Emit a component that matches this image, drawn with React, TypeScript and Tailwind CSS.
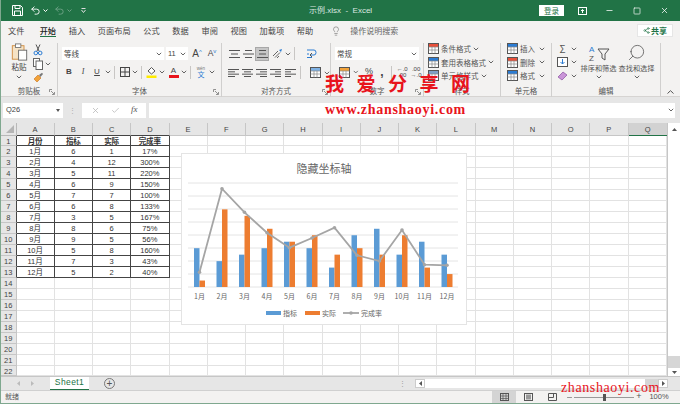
import React from 'react';
import { Undo2, Redo2, Lightbulb, Search, X, Check, Minus, Square, Share2 } from 'lucide-react';

const cjk = 'font-["Noto_Sans_CJK_SC","Liberation_Sans",sans-serif]';

const tabs = ['文件', '开始', '插入', '页面布局', '公式', '数据', '审阅', '视图', '加载项', '帮助'];
const columns = ['A', 'B', 'C', 'D', 'E', 'F', 'G', 'H', 'I', 'J', 'K', 'L', 'M', 'N', 'O', 'P', 'Q'];
const sheetRows = [
  ['月份', '指标', '实际', '完成率'],
  ['1月', '6', '1', '17%'],
  ['2月', '4', '12', '300%'],
  ['3月', '5', '11', '220%'],
  ['4月', '6', '9', '150%'],
  ['5月', '7', '7', '100%'],
  ['6月', '6', '8', '133%'],
  ['7月', '3', '5', '167%'],
  ['8月', '8', '6', '75%'],
  ['9月', '9', '5', '56%'],
  ['10月', '5', '8', '160%'],
  ['11月', '7', '3', '43%'],
  ['12月', '5', '2', '40%'],
];

const Chev = ({ className = '' }: { className?: string }) => (
  <svg width="6" height="4" viewBox="0 0 6 4" className={className}>
    <path d="M0.8 0.8 L3 3 L5.2 0.8" fill="none" stroke="#555" strokeWidth="0.9" />
  </svg>
);

const Launcher = () => (
  <svg width="6" height="6" viewBox="0 0 6 6" className="absolute right-[2px] bottom-[2px]">
    <path d="M0.5 3 V0.5 H3 M5.5 3 V5.5 H3 M2 2 L5 5" fill="none" stroke="#777" strokeWidth="0.8" />
  </svg>
);

// little stack of text lines, used for the alignment buttons
const Lines = ({ rows }: { rows: [number, number][] }) => (
  <svg width="11" height="10" viewBox="0 0 11 10">
    {rows.map(([a, b], i) => (
      <line key={i} x1={a} x2={b} y1={1.5 + i * (7 / (rows.length - 1))} y2={1.5 + i * (7 / (rows.length - 1))} stroke="#555" strokeWidth="1" />
    ))}
  </svg>
);

const Group = ({ width, label, launcher, children }: { width: string; label: string; launcher?: boolean; children: React.ReactNode }) => (
  <div className={`${width} relative flex flex-col border-r border-[#d0cfce] shrink-0 h-[54px]`}>
    <div className="flex-1 min-h-0">{children}</div>
    <div className="h-[12px] text-center text-[7.5px] leading-[12px] text-[#555]">{label}</div>
    {launcher && <Launcher />}
  </div>
);

const Sep = () => <div className="w-px h-[13px] bg-[#c8c6c4] mx-[3px]" />;

const StyleRow = ({ icon, label }: { icon: React.ReactNode; label: string }) => (
  <div className="flex items-center h-[13.5px] pl-[1px]">
    <span className="w-[12px] h-[12px] flex items-center justify-center">{icon}</span>
    <span className="ml-[2px] text-[7.5px] text-[#555] whitespace-nowrap">{label}</span>
    <Chev className="ml-[2px]" />
  </div>
);

const TableIcon = ({ accent }: { accent: string }) => (
  <svg width="11" height="11" viewBox="0 0 11 11">
    <rect x="0.5" y="0.5" width="10" height="10" fill="#fff" stroke="#555" />
    <rect x="1" y="1" width="9" height="3" fill={accent} />
    <path d="M0.5 4 H10.5 M0.5 7 H10.5 M4 4 V10.5 M7 4 V10.5" stroke="#888" strokeWidth="0.7" />
  </svg>
);

const Ribbon = () => (
  <div className="h-[57px] bg-[#f3f2f1] flex pt-[3px] border-b border-[#d6d4d2]">
    <Group width="w-[57px]" label="剪贴板" launcher>
      <div className="flex pl-[8px]">
        <div className="flex flex-col items-center w-[20px]">
          <svg width="17" height="18" viewBox="0 0 18 20">
            <rect x="1" y="3" width="13" height="15" fill="#f6e3c5" stroke="#d08a3c" />
            <rect x="4.5" y="1" width="6" height="4" fill="#fff" stroke="#777" />
            <rect x="8" y="8" width="9" height="11" fill="#fff" stroke="#666" />
          </svg>
          <span className="text-[7.5px] leading-[10px] text-[#444] mt-[1px]">粘贴</span>
          <Chev className="mt-[3px]" />
        </div>
        <div className="flex flex-col ml-[4px] gap-[2px] pt-[1px]">
          <svg width="10" height="12" viewBox="0 0 10 12">
            <path d="M3 0.5 L6 7 M7 0.5 L4 7" stroke="#555" fill="none" />
            <circle cx="2.8" cy="9" r="1.8" fill="none" stroke="#2b7cd3" />
            <circle cx="7.2" cy="9" r="1.8" fill="none" stroke="#2b7cd3" />
          </svg>
          <div className="flex items-center gap-[2px]">
            <svg width="10" height="12" viewBox="0 0 10 12">
              <rect x="0.5" y="0.5" width="6" height="8" fill="#fff" stroke="#666" />
              <rect x="3" y="3" width="6.5" height="8.5" fill="#fff" stroke="#666" />
            </svg>
            <Chev />
          </div>
          <svg width="11" height="11" viewBox="0 0 11 11">
            <path d="M1 7 L5 3 L8 6 L4 10 Z" fill="#f2a33a" stroke="#c8701c" strokeWidth="0.6" />
            <path d="M6 3 L9 0.8 L10 2 L7.5 5" fill="#777" />
          </svg>
        </div>
      </div>
    </Group>

    <Group width="w-[164px]" label="字体" launcher>
      <div className="pl-[4px] pt-[4px]">
        <div className="flex items-center">
          <div className="w-[102px] h-[13px] bg-white flex items-center justify-between pl-[2px] pr-[2px]">
            <span className="text-[7.5px] text-[#444]">等线</span>
            <Chev />
          </div>
          <div className="w-[22px] h-[13px] bg-white ml-[2px] flex items-center justify-between pl-[2px] pr-[2px]">
            <span className="text-[7.5px] text-[#444] font-['Liberation_Sans',sans-serif]">11</span>
            <Chev />
          </div>
          <span className="w-[14px] ml-[2px] text-center text-[10px] leading-[13px] text-[#444] font-['Liberation_Sans',sans-serif]">A<sup className="text-[6px] text-[#2b7cd3]">^</sup></span>
          <span className="w-[14px] ml-[1px] text-center text-[8.5px] leading-[13px] text-[#444] font-['Liberation_Sans',sans-serif]">A<sup className="text-[6px] text-[#2b7cd3]">v</sup></span>
        </div>
        <div className="flex items-center mt-[5px] h-[14px] text-[#444] font-['Liberation_Sans',sans-serif] text-[8px]">
          <span className="w-[14px] text-center font-bold">B</span>
          <span className="w-[14px] text-center italic font-['Liberation_Serif',serif]">I</span>
          <span className="w-[14px] text-center underline">U</span>
          <Chev className="ml-[1px]" />
          <Sep />
          <svg width="10" height="10" viewBox="0 0 10 10" className="ml-[2px]">
            <rect x="0.5" y="0.5" width="9" height="9" fill="none" stroke="#444" />
            <path d="M5 0.5 V9.5 M0.5 5 H9.5" stroke="#444" />
          </svg>
          <Chev className="ml-[2px]" />
          <Sep />
          <svg width="11" height="12" viewBox="0 0 11 12" className="ml-[1px]">
            <path d="M2 5 L5.5 1.5 L9 5 L5.5 8 Z" fill="#fff" stroke="#555" />
            <rect x="0.5" y="9.5" width="10" height="2.5" fill="#ffeb00" />
          </svg>
          <Chev className="ml-[2px]" />
          <div className="flex flex-col items-center w-[11px] ml-[3px] leading-[9px]">
            <span>A</span>
            <span className="w-[10px] h-[2.5px] bg-[#e8141c]" />
          </div>
          <Chev className="ml-[2px]" />
          <Sep />
          <div className="flex flex-col items-center w-[12px] ml-[1px]">
            <span className="text-[4.5px] leading-[5px] text-[#777]">wén</span>
            <span className={`text-[7px] leading-[7px] text-[#2b7cd3] ${cjk}`}>文</span>
          </div>
          <Chev className="ml-[2px]" />
        </div>
      </div>
    </Group>

    <Group width="w-[109px]" label="对齐方式" launcher>
      <div className="pl-[5px] pt-[3px]">
        <div className="flex items-center h-[15px]">
          <span className="w-[14px] flex justify-center"><Lines rows={[[0, 11], [2, 9], [0, 11]]} /></span>
          <span className="w-[14px] flex justify-center"><Lines rows={[[2, 9], [0, 11], [2, 9]]} /></span>
          <span className="w-[14px] h-[14px] bg-[#c6c6c6] border border-[#a8a8a8] flex items-center justify-center"><Lines rows={[[2, 9], [2, 9], [0, 11]]} /></span>
          <svg width="11" height="11" viewBox="0 0 11 11" className="ml-[3px]">
            <path d="M1 8 L6 3 M3 9.5 L8 4.5 M5 10 L7 8" stroke="#666" strokeWidth="1" />
            <path d="M7 2 L10 1 L9 4" fill="#2b7cd3" />
          </svg>
          <Chev className="ml-[2px]" />
          <Sep />
          <svg width="11" height="11" viewBox="0 0 11 11" className="ml-[8px]">
            <path d="M1 2 H8 Q10 2 10 4.5 Q10 7 8 7 H5 M1 6 H3 M1 9.5 H6" fill="none" stroke="#2b7cd3" />
            <path d="M6 5 L4 7 L6 9" fill="none" stroke="#555" />
          </svg>
        </div>
        <div className="flex items-center h-[15px] mt-[4px]">
          <span className="w-[14px] flex justify-center"><Lines rows={[[0, 11], [0, 7], [0, 11], [0, 7]]} /></span>
          <span className="w-[14px] flex justify-center"><Lines rows={[[0, 11], [2, 9], [0, 11], [2, 9]]} /></span>
          <span className="w-[14px] flex justify-center"><Lines rows={[[0, 11], [4, 11], [0, 11], [4, 11]]} /></span>
          <span className="w-[15px] flex justify-center"><Lines rows={[[0, 11], [5, 11], [0, 11], [5, 11]]} /></span>
          <span className="w-[14px] flex justify-center"><Lines rows={[[0, 11], [0, 6], [0, 11], [0, 6]]} /></span>
          <Sep />
          <span className="ml-[6px] flex"><TableIcon accent="#7fb2e5" /></span>
          <Chev className="ml-[3px]" />
        </div>
      </div>
    </Group>

    <Group width="w-[93px]" label="数字" launcher>
      <div className="pl-[4px] pt-[4px]">
        <div className="w-[84px] h-[13px] bg-white flex items-center justify-between px-[2px]">
          <span className="text-[7.5px] text-[#444]">常规</span>
          <Chev />
        </div>
        <div className="flex items-center mt-[5px] h-[14px] font-['Liberation_Sans',sans-serif] text-[#444]">
          <span className="ml-[4px] flex"><TableIcon accent="#f2a33a" /></span>
          <Chev className="ml-[3px]" />
          <span className="w-[14px] ml-[4px] text-center text-[9px]">%</span>
          <span className="w-[14px] text-center text-[12px] font-bold leading-[10px]">,</span>
          <Sep />
          <span className="w-[15px] text-center text-[6px] leading-[6px]">←.0<br />.00</span>
          <span className="w-[15px] text-center text-[6px] leading-[6px]">.00<br />→.0</span>
        </div>
      </div>
    </Group>

    <Group width="w-[77px]" label="样式">
      <div className="pl-[2px] -mt-[1px]">
        <StyleRow icon={<TableIcon accent="#e8503a" />} label="条件格式" />
        <StyleRow icon={<TableIcon accent="#2b7cd3" />} label="套用表格格式" />
        <StyleRow icon={<TableIcon accent="#7fa0c8" />} label="单元格样式" />
      </div>
    </Group>

    <Group width="w-[51px]" label="单元格">
      <div className="pl-[6px] -mt-[1px]">
        {['插入', '删除', '格式'].map((t, i) => (
          <div key={t} className="flex items-center h-[13.5px]">
            <TableIcon accent={i === 1 ? '#e8503a' : '#2b7cd3'} />
            <span className="ml-[2px] text-[7.5px] text-[#555] w-[19px]">{t}</span>
            <Chev />
          </div>
        ))}
      </div>
    </Group>

    <div className="w-[109px] relative flex flex-col border-r border-[#d0cfce] shrink-0 h-[54px]">
      <div className="flex-1 flex min-h-0">
        <div className="pl-[5px] w-[27px] -mt-[1px]">
          <div className="flex items-center h-[13.5px] gap-[3px]">
            <span className="w-[11px] text-center text-[10px] leading-[10px] text-[#555]">Σ</span>
            <Chev />
          </div>
          <div className="flex items-center h-[13.5px] gap-[3px]">
            <svg width="11" height="10" viewBox="0 0 11 10">
              <rect x="0.5" y="0.5" width="10" height="9" fill="#fff" stroke="#555" />
              <path d="M5.5 2 V7 M3.5 5 L5.5 7 L7.5 5" fill="none" stroke="#2b7cd3" />
            </svg>
            <Chev />
          </div>
          <div className="flex items-center h-[13.5px] gap-[3px]">
            <svg width="11" height="10" viewBox="0 0 11 10">
              <path d="M1 6 L6 1 L10 4 L5 9 Z" fill="#c995d8" stroke="#8a4fa0" strokeWidth="0.7" />
            </svg>
            <Chev />
          </div>
        </div>
        <div className="w-[39px] flex flex-col items-center">
          <svg width="22" height="18" viewBox="0 0 22 18" className="mt-[1px]">
            <text x="1" y="8" fontSize="8" fill="#2b7cd3" fontFamily="Liberation Sans">A</text>
            <text x="1" y="17" fontSize="8" fill="#555" fontFamily="Liberation Sans">Z</text>
            <path d="M10 5 H21 L17 10 V16 L14 14 V10 Z" fill="none" stroke="#555" />
          </svg>
          <span className="text-[7.2px] leading-[9px] text-[#555] whitespace-nowrap mt-[2px]">排序和筛选</span>
          <Chev className="mt-[2px]" />
        </div>
        <div className="w-[37px] flex flex-col items-center">
          <Search size={19} strokeWidth={1} className="text-[#555] -scale-x-100" />
          <span className="text-[7.2px] leading-[9px] text-[#555] whitespace-nowrap mt-[2px]">查找和选择</span>
          <Chev className="mt-[2px]" />
        </div>
      </div>
      <div className="h-[12px] text-center text-[7.5px] leading-[12px] text-[#555]">编辑</div>
    </div>

    <div className="flex-1 flex items-end justify-center pb-[2px]">
      <svg width="7" height="4" viewBox="0 0 7 4">
        <path d="M0.5 3.5 L3.5 0.7 L6.5 3.5" fill="none" stroke="#555" />
      </svg>
    </div>
  </div>
);

const FormulaBar = () => (
  <div className="h-[26px] bg-[#e6e6e6] flex items-center pl-[2px] pr-[5px]">
    <div className="w-[60px] h-[15px] bg-white flex items-center justify-between px-[3px]">
      <span className="text-[7.5px] text-[#444] font-['Liberation_Sans',sans-serif]">Q26</span>
      <svg width="4" height="3" viewBox="0 0 4 3"><path d="M0 0 H4 L2 3 Z" fill="#555" /></svg>
    </div>
    <div className="w-[19px] flex justify-center text-[7px] leading-[4px] text-[#aaa]">⋮</div>
    <div className="w-[64px] h-[15px] bg-white flex items-center justify-around px-[3px] text-[#b5b5b5]">
      <X size={9} />
      <Check size={9} />
      <span className="text-[9px] italic text-[#555] font-['Liberation_Serif',serif]">fx</span>
    </div>
    <div className="flex-1 h-[15px] ml-[3px] bg-white flex items-center justify-end pr-[1px]">
      <Chev />
    </div>
  </div>
);

const Sheet = () => (
  <div className="relative flex h-[253px]">
    <div className="w-[666px] grid grid-cols-[15.5px_repeat(17,38.26px)] grid-rows-[12.5px_repeat(22,10.96px)] font-['Liberation_Sans','Noto_Sans_CJK_SC',sans-serif]">
      <div className="bg-[#e6e6e6] border-r border-b border-[#b8b8b8] relative overflow-hidden">
        <svg width="10" height="10" viewBox="0 0 10 10" className="absolute right-[1px] bottom-[1px]">
          <path d="M9 1 V9 H1 Z" fill="#b5b5b5" />
        </svg>
      </div>
      {columns.map((c, ci) => (
        <div
          key={c}
          className={
            c === 'Q'
              ? 'bg-[#d2d2d2] border-b-[1.5px] border-[#217346] text-center text-[7.5px] leading-[13px] text-[#444]'
              : ci < 4
                ? 'bg-[#e6e6e6] border-r border-b border-r-[#c6c6c6] border-b-[#444] text-center text-[7.5px] leading-[13px] text-[#444]'
                : 'bg-[#e6e6e6] border-r border-b border-[#c6c6c6] text-center text-[7.5px] leading-[13px] text-[#444]'
          }
        >
          {c}
        </div>
      ))}
      {Array.from({ length: 22 }).map((_, r) => (
        <React.Fragment key={r}>
          <div className={r < 13
            ? 'bg-[#e6e6e6] border-r border-b border-r-[#444] border-b-[#c6c6c6] text-center text-[7.5px] leading-[11px] text-[#444]'
            : 'bg-[#e6e6e6] border-r border-b border-[#c6c6c6] text-center text-[7.5px] leading-[11px] text-[#444]'}>{r + 1}</div>
          {columns.map((c, ci) => {
            const value = sheetRows[r]?.[ci];
            if (value !== undefined) {
              return (
                <div key={c} className={`border-r border-b border-[#444] text-center text-[7.5px] leading-[11px] text-[#333] ${r === 0 ? 'font-bold' : ''}`}>
                  {value}
                </div>
              );
            }
            return <div key={c} className="border-r border-b border-[#e2e2e2] bg-white" />;
          })}
        </React.Fragment>
      ))}
    </div>

    <div className="flex-1 bg-[#e6e6e6] border-l border-[#c6c6c6] flex flex-col">
      <div className="h-[12px] bg-white flex items-center justify-center">
        <svg width="5" height="3" viewBox="0 0 5 3"><path d="M0 3 H5 L2.5 0 Z" fill="#555" /></svg>
      </div>
      <div className="h-[221px] bg-white" />
      <div className="flex-1 bg-[#d6d6d6]" />
      <div className="h-[8px] bg-white flex items-center justify-center">
        <svg width="5" height="3" viewBox="0 0 5 3"><path d="M0 0 H5 L2.5 3 Z" fill="#555" /></svg>
      </div>
    </div>

    <Chart />
  </div>
);

const barData = [
  [6, 1], [4, 12], [5, 11], [6, 9], [7, 7], [6, 8], [3, 5], [8, 6], [9, 5], [5, 8], [7, 3], [5, 2],
];
const linePts = [89.3, 5.7, 29.3, 49.7, 64.7, 55, 44.7, 72.3, 78, 47, 81.7, 82.3];

const Chart = () => {
  // coordinates inside the chart box, baseline and spacing measured off the screenshot
  const base = 134;
  const x = (i: number) => 18.5 + 22.5 * i;
  return (
    <div className="absolute left-[180px] top-[30px] w-[286px] h-[172px] bg-white border border-[#e4e4e4] flex flex-col items-center">
      <div className={`mt-[6px] text-[11px] leading-[16px] text-[#666] ${cjk}`}>隐藏坐标轴</div>
      <svg width="284" height="148" viewBox="1 23 284 148" className="block">
        {Array.from({ length: 9 }).map((_, i) => (
          <line key={i} x1="7" x2="277" y1={30 + 13 * i} y2={30 + 13 * i} stroke="#e4e4e4" strokeWidth="1" />
        ))}
        {barData.map(([a, b], i) => (
          <g key={i}>
            <rect x={x(i) - 5.5} y={base - a * 6.47} width="5.5" height={a * 6.47} fill="#5b9bd5" />
            <rect x={x(i)} y={base - b * 6.47} width="5.5" height={b * 6.47} fill="#ed7d31" />
            <text x={x(i)} y="146" textAnchor="middle" fontSize="7" fill="#666" fontFamily="Noto Sans CJK SC">{i + 1}月</text>
          </g>
        ))}
        <polyline points={linePts.map((v, i) => `${x(i)},${v + 30}`).join(' ')} fill="none" stroke="#a5a5a5" strokeWidth="1.8" />
        {linePts.map((v, i) => (
          <circle key={i} cx={x(i)} cy={v + 30} r="1.8" fill="#a5a5a5" />
        ))}
        <rect x="85" y="158" width="15" height="4" fill="#5b9bd5" />
        <text x="102" y="162.5" fontSize="7" fill="#666" fontFamily="Noto Sans CJK SC">指标</text>
        <rect x="124" y="158" width="15" height="4" fill="#ed7d31" />
        <text x="141" y="162.5" fontSize="7" fill="#666" fontFamily="Noto Sans CJK SC">实际</text>
        <line x1="162" x2="178" y1="160" y2="160" stroke="#a5a5a5" strokeWidth="1.8" />
        <circle cx="170" cy="160" r="1.8" fill="#a5a5a5" />
        <text x="180" y="162.5" fontSize="7" fill="#666" fontFamily="Noto Sans CJK SC">完成率</text>
      </svg>
    </div>
  );
};

const TabBar = () => (
  <div className="h-[14px] bg-[#e6e6e6] border-t border-[#c6c6c6] flex items-stretch">
    <div className="w-[49px] flex items-center justify-around px-[10px] text-[#bbb]">
      <svg width="3" height="5" viewBox="0 0 3 5"><path d="M3 0 V5 L0 2.5 Z" fill="#bbb" /></svg>
      <svg width="3" height="5" viewBox="0 0 3 5"><path d="M0 0 V5 L3 2.5 Z" fill="#bbb" /></svg>
    </div>
    <div className="w-[39px] bg-white border-b-[1.5px] border-[#217346] text-center text-[8.5px] leading-[11px] text-[#217346] font-['Liberation_Sans',sans-serif] tracking-[0.4px]">Sheet1</div>
    <div className="w-[15px]" />
    <div className="w-[11px] h-[11px] rounded-full border border-[#777] self-center flex items-center justify-center text-[10px] leading-[9px] text-[#555] font-['Liberation_Sans',sans-serif]">+</div>
    <div className="flex-1" />
    <div className="w-[10px] text-center text-[7px] leading-[12px] text-[#999]">⋮</div>
    <div className="w-[8px]" />
    <div className="w-[253px] h-[9px] self-center flex">
      <div className="w-[10px] bg-white border border-[#ccc] flex items-center justify-center">
        <svg width="3" height="5" viewBox="0 0 3 5"><path d="M3 0 V5 L0 2.5 Z" fill="#555" /></svg>
      </div>
      <div className="w-[220px] bg-white" />
      <div className="w-[13px] bg-[#d6d6d6]" />
      <div className="w-[10px] bg-white border border-[#ccc] flex items-center justify-center">
        <svg width="3" height="5" viewBox="0 0 3 5"><path d="M0 0 V5 L3 2.5 Z" fill="#555" /></svg>
      </div>
    </div>
    <div className="w-[12px]" />
  </div>
);

const StatusBar = () => (
  <div className="h-[13px] bg-[#f3f2f1] border-t border-[#d0d0d0] flex items-stretch text-[#555]">
    <span className="pl-[4px] text-[7px] leading-[11px]">就绪</span>
    <div className="flex-1" />
    <div className="w-[24px] bg-[#d4d4d4] flex items-center justify-center">
      <svg width="9" height="8" viewBox="0 0 9 8">
        <rect x="0.5" y="0.5" width="8" height="7" fill="none" stroke="#555" />
        <path d="M0.5 3 H8.5 M0.5 5.5 H8.5 M3 0.5 V7.5 M6 0.5 V7.5" stroke="#555" strokeWidth="0.7" />
      </svg>
    </div>
    <div className="w-[24px] flex items-center justify-center">
      <svg width="9" height="8" viewBox="0 0 9 8">
        <rect x="0.5" y="0.5" width="8" height="7" fill="none" stroke="#555" />
        <rect x="2" y="1.5" width="5" height="5" fill="#999" />
      </svg>
    </div>
    <div className="w-[24px] flex items-center justify-center">
      <svg width="9" height="8" viewBox="0 0 9 8">
        <path d="M0.5 0.5 H8.5 V7.5 H0.5 Z M5.5 0.5 V4.5 H0.5" fill="none" stroke="#555" />
      </svg>
    </div>
    <span className="w-[10px] flex items-center justify-center"><Minus size={7} /></span>
    <div className="w-[60px] flex items-center relative">
      <div className="w-full h-px bg-[#999]" />
      <div className="absolute left-[29px] w-[3px] h-[7px] bg-[#555]" />
    </div>
    <span className="w-[10px] text-center text-[9px] leading-[11px] font-['Liberation_Sans',sans-serif]">+</span>
    <span className="w-[20px] ml-[5px] text-center text-[7.5px] leading-[11px] font-['Liberation_Sans',sans-serif]">100%</span>
    <div className="w-[11px]" />
  </div>
);

export default function App() {
  return (
    <div className={`relative w-[680px] h-[404px] overflow-hidden flex flex-col bg-white border-l border-b border-[#7fa88f] ${cjk}`}>
      <div className="h-[21px] bg-[#217346] flex items-center text-white shrink-0">
        <svg width="11" height="11" viewBox="0 0 11 11" className="ml-[11px]">
          <path d="M0.5 0.5 H8.5 L10.5 2.5 V10.5 H0.5 Z M3 0.5 V3.5 H8 V0.5 M2.5 10.5 V6 H8.5 V10.5" fill="none" stroke="#fff" />
        </svg>
        <Undo2 size={11} className="ml-[7px]" />
        <span className="ml-[2px] flex"><svg width="5" height="3" viewBox="0 0 5 3"><path d="M0.5 0.5 L2.5 2.5 L4.5 0.5" fill="none" stroke="#fff" /></svg></span>
        <Redo2 size={11} className="ml-[6px] text-[#6fa287] -scale-x-100" />
        <span className="ml-[2px] flex"><svg width="5" height="3" viewBox="0 0 5 3"><path d="M0.5 0.5 L2.5 2.5 L4.5 0.5" fill="none" stroke="#6fa287" /></svg></span>
        <span className="ml-[9px] flex"><svg width="5" height="5" viewBox="0 0 5 5"><path d="M0.5 0.5 H4.5 M0.5 2 L2.5 4.5 L4.5 2" fill="none" stroke="#ddd" /></svg></span>
        <span className="ml-[223px] w-[60px] text-[8px] text-[#dbe8e0] whitespace-nowrap font-['Liberation_Sans','Noto_Sans_CJK_SC',sans-serif]">示例.xlsx&nbsp; -&nbsp; Excel</span>
        <span className="ml-[170px] w-[25px] h-[11px] bg-white text-center text-[7.5px] leading-[11px] text-[#217346]">登录</span>
        <svg width="9" height="8" viewBox="0 0 9 8" className="ml-[14px]">
          <rect x="0.5" y="0.5" width="8" height="7" fill="none" stroke="#fff" />
          <path d="M4.5 6 V2.5 M3 4 L4.5 2.5 L6 4" fill="none" stroke="#fff" />
        </svg>
        <Minus size={9} className="ml-[18px]" />
        <Square size={8} className="ml-[18.5px]" />
        <X size={9} className="ml-[19.5px]" />
      </div>

      <div className="h-[19px] bg-[#f3f2f1] flex items-center relative shrink-0">
        <div className="flex pl-[7px] gap-[12.7px] text-[8.2px] text-[#444]">
          {tabs.map((t) => (
            <span key={t} className={t === '开始' ? 'ml-[2.6px] text-[#222] font-medium border-b-[1.5px] border-[#217346] leading-[12px]' : 'leading-[12px]'}>{t}</span>
          ))}
        </div>
        <Lightbulb size={10} strokeWidth={1.2} className="ml-[18px] text-[#555]" />
        <span className="ml-[9px] text-[8px] text-[#666]">操作说明搜索</span>
        <div className="absolute left-[636px] top-[3px] w-[36px] h-[13px] bg-white border border-[#e6e6e6] flex items-center justify-center gap-[1px]">
          <Share2 size={7} className="text-[#217346]" />
          <span className="text-[8px] leading-[11px] font-bold text-[#217346]">共享</span>
        </div>
      </div>

      <Ribbon />
      <FormulaBar />
      <Sheet />
      <TabBar />
      <StatusBar />

      <div className={`absolute left-[324px] top-[72px] text-[19px] leading-[22px] font-bold text-[#e8141c] whitespace-nowrap tracking-[12.5px] ${cjk}`}>我爱分享网</div>
      <div className="absolute left-[324px] top-[102px] text-[14px] leading-[16px] font-bold text-[#e8141c] whitespace-nowrap font-['Liberation_Serif',serif] tracking-[0.7px]">www.zhanshaoyi.com</div>
      <div className="absolute left-[560px] top-[380px] text-[14px] leading-[16px] text-[#e8141c] whitespace-nowrap font-['Liberation_Serif',serif] tracking-[0.6px]">zhanshaoyi.com</div>
    </div>
  );
}
